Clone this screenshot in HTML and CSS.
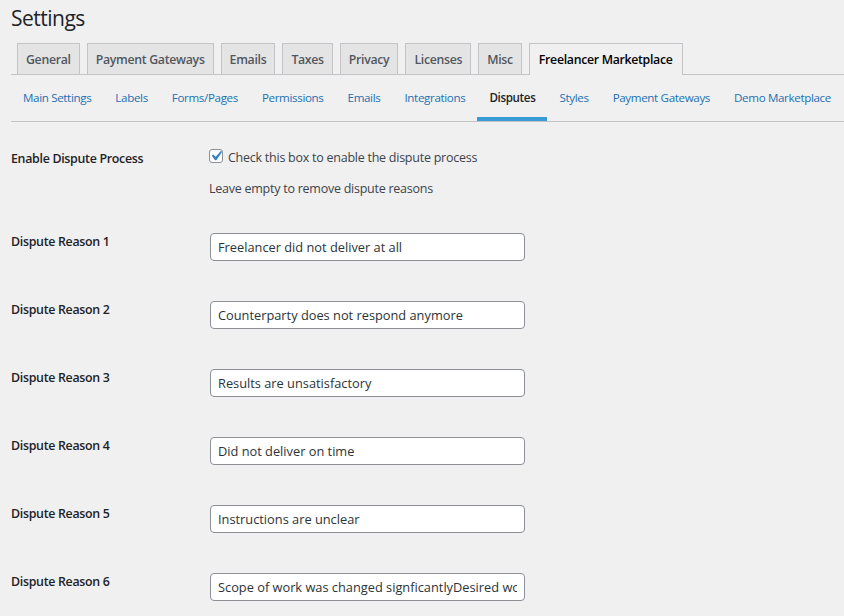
FILE: index.html
```html
<!doctype html>
<html>
<head>
    <meta charset="utf-8">
    <title>Settings</title>
    <link rel="stylesheet" href="styles.css">
</head>
<body>
<div class="wrap">
    <h1>Settings</h1>
    <nav class="nav-tab-wrapper">
        <a class="nav-tab" href="#">General</a>
        <a class="nav-tab" href="#">Payment Gateways</a>
        <a class="nav-tab" href="#">Emails</a>
        <a class="nav-tab" href="#">Taxes</a>
        <a class="nav-tab" href="#">Privacy</a>
        <a class="nav-tab" href="#">Licenses</a>
        <a class="nav-tab" href="#">Misc</a>
        <a class="nav-tab nav-tab-active" href="#">Freelancer Marketplace</a>
    </nav>
    <ul class="subnav">
        <li><a href="#">Main Settings</a></li>
        <li><a href="#">Labels</a></li>
        <li><a href="#">Forms/Pages</a></li>
        <li><a href="#">Permissions</a></li>
        <li><a href="#">Emails</a></li>
        <li><a href="#">Integrations</a></li>
        <li class="current"><a href="#">Disputes</a></li>
        <li><a href="#">Styles</a></li>
        <li><a href="#">Payment Gateways</a></li>
        <li><a href="#">Demo Marketplace</a></li>
    </ul>
    <table class="form-table">
        <tr class="first-row">
            <th>Enable Dispute Process</th>
            <td>
                <label class="check">
                    <span class="box"><svg viewBox="0 0 20 20" width="20" height="20"><path d="M14.83 4.89l1.34.94-5.81 8.38H9.02L5.78 9.67l1.34-1.25 2.57 2.4z" fill="#3582c4"/></svg></span>
                    Check this box to enable the dispute process
                </label>
                <p class="description">Leave empty to remove dispute reasons</p>
            </td>
        </tr>
        <tr>
            <th>Dispute Reason 1</th>
            <td><input type="text" class="regular-text" value="Freelancer did not deliver at all"></td>
        </tr>
        <tr>
            <th>Dispute Reason 2</th>
            <td><input type="text" class="regular-text" value="Counterparty does not respond anymore"></td>
        </tr>
        <tr>
            <th>Dispute Reason 3</th>
            <td><input type="text" class="regular-text" value="Results are unsatisfactory"></td>
        </tr>
        <tr>
            <th>Dispute Reason 4</th>
            <td><input type="text" class="regular-text" value="Did not deliver on time"></td>
        </tr>
        <tr>
            <th>Dispute Reason 5</th>
            <td><input type="text" class="regular-text" value="Instructions are unclear"></td>
        </tr>
        <tr>
            <th>Dispute Reason 6</th>
            <td><input type="text" class="regular-text" value="Scope of work was changed signficantlyDesired work quality"></td>
        </tr>
    </table>
</div>
</body>
</html>
```
FILE: styles.css
```css
body {margin: 0; padding: 0; background: #f0f0f1; color: #3c434a; font-family: 'Open Sans', 'Noto Sans', sans-serif; font-size: 13px; line-height: 1.4;}
.wrap {padding-left: 11px; overflow: hidden;}
h1 {margin: 0; padding: 3px 0 0; font-size: 21px; font-weight: 400; letter-spacing: -0.5px; line-height: 30px; color: #1d2327;}
a {text-decoration: none;}

.nav-tab-wrapper {display: flex; margin-top: 10px; border-bottom: 1px solid #c3c4c7; height: 31px;}
.nav-tab {display: block; margin-left: 6px; padding: 3px 8px 0; height: 27px; line-height: 26px; border: 1px solid #c3c4c7; border-bottom: none; background: #e4e4e4; color: #50575e; font-size: 12.3px; font-weight: 600; letter-spacing: -0.3px; white-space: nowrap;}
.nav-tab + .nav-tab {margin-left: 7px;}
.nav-tab-active {background: #f0f0f1; color: #000; height: 28px; margin-bottom: -1px; padding: 3px 9px 0;}

.subnav {display: flex; margin: 0; padding: 0; list-style: none; border-bottom: 1px solid #c3c4c7;}
.subnav li a {display: block; padding: 13px 12px 9px; line-height: 20px; border-bottom: 4px solid transparent; color: #2271b1; font-size: 11.6px; letter-spacing: -0.35px; white-space: nowrap;}
.subnav li.current a {color: #1d2327; font-weight: 600; border-bottom-color: #3a9ad6;}

.form-table {margin-top: 8px; border-collapse: collapse;}
.form-table th {width: 188px; padding: 20px 10px 20px 0; text-align: left; vertical-align: top; font-weight: 600; color: #1d2327; line-height: 17px; font-size: 12.4px; letter-spacing: -0.3px;}
.form-table td {padding: 20px 10px 20px 0; vertical-align: top; line-height: 17px; font-size: 12.5px; letter-spacing: -0.25px;}
.form-table .first-row td,
.form-table .first-row th {padding-bottom: 16px;}
.form-table .first-row td {padding-top: 19px;}

.check {display: flex; align-items: center; gap: 5px;}
.box {display: block; width: 12px; height: 12px; margin-top: -3px; border: 1px solid #8c8f94; border-radius: 3px; background: #fff; position: relative;}
.box svg {position: absolute; left: -4px; top: -4px;}
.description {margin: 14px 0 0;}

.regular-text {box-sizing: border-box; display: block; width: 315px; height: 28px; margin: 0 0 0 1px; padding: 0 7px; border: 1px solid #8c8f94; border-radius: 4px; background: #fff; color: #2c3338; font-family: 'Open Sans', 'Noto Sans', sans-serif; font-size: 12.8px;}
```
